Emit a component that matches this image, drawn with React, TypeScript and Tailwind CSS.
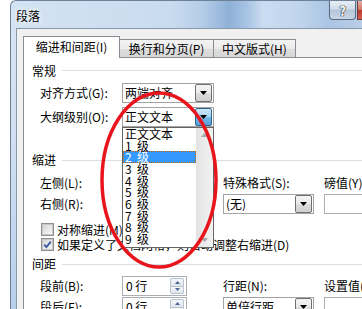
import React from "react";

const levels = ["正文文本", "1", "2", "3", "4", "5", "6", "7", "8", "9"];

function Arrow({ color = "#000" }: { color?: string }) {
  return (
    <svg width="7" height="4" viewBox="0 0 7 4" className="block">
      <path d="M0 0H7L3.5 4Z" fill={color} />
    </svg>
  );
}

function Select({ text, open, className = "w-[92px]" }: { text: string; open?: boolean; className?: string }) {
  return (
    <div className={`flex h-[20px] items-center border border-[#a3a3a3] bg-white ${className}`}>
      <span className="flex-1 whitespace-nowrap pl-[2px]">{text}</span>
      {open ? (
        <div className="mr-px flex h-[18px] w-[17px] items-center justify-center rounded-[2px] border border-[#2c628b] bg-[linear-gradient(#cbe7fa,#a2d3f2_50%,#74b9e8_51%,#559fd9)]">
          <Arrow />
        </div>
      ) : (
        <div className="mr-px flex h-[18px] w-[17px] items-center justify-center rounded-[2px] border border-[#707070] bg-[linear-gradient(#f4f4f4,#ebebeb_50%,#dddddd_51%,#cfcfcf)]">
          <Arrow />
        </div>
      )}
    </div>
  );
}

function Spinner({ text }: { text: string }) {
  return (
    <div className="flex h-[20px] w-[65px] items-center border border-[#abadb3] bg-white">
      <span className="flex-1 whitespace-pre pl-[3px]">{text}</span>
      <div className="mr-[2px] flex h-[16px] w-[14px] flex-col">
        <div className="flex flex-1 items-center justify-center rounded-t-[2px] border border-[#b8c3cf] bg-[linear-gradient(#f5f7fa,#dfe5ec)]">
          <svg width="5" height="3" viewBox="0 0 5 3" className="block">
            <path d="M0 3H5L2.5 0Z" fill="#4a6595" />
          </svg>
        </div>
        <div className="flex flex-1 items-center justify-center rounded-b-[2px] border border-t-0 border-[#b8c3cf] bg-[linear-gradient(#f5f7fa,#dfe5ec)]">
          <svg width="5" height="3" viewBox="0 0 5 3" className="block">
            <path d="M0 0H5L2.5 3Z" fill="#4a6595" />
          </svg>
        </div>
      </div>
    </div>
  );
}

function Heading({ text, className }: { text: string; className: string }) {
  return (
    <div className={`flex items-center ${className}`}>
      <span>{text}</span>
      <div className="ml-[6px] h-px flex-1 bg-[#d5dfe5]" />
    </div>
  );
}

function Checkbox({ checked }: { checked?: boolean }) {
  return (
    <div className="ml-px flex h-[13px] w-[13px] shrink-0 items-center justify-center border border-[#8e8f8f] bg-[#f4f4f4]">
      <div className="flex h-[11px] w-[11px] items-center justify-center border border-[#c8c8c8] bg-[linear-gradient(135deg,#d8d8d8,#f6f6f6)]">
        {checked && (
          <svg width="9" height="9" viewBox="0 0 9 9" className="block">
            <path d="M1.2 4.6L3.4 7L7.8 1.6" stroke="#3c58a4" strokeWidth="1.8" fill="none" />
          </svg>
        )}
      </div>
    </div>
  );
}

function Level({ l }: { l: string }) {
  if (l.length > 1) return <>{l}</>;
  return (
    <>
      <span className="inline-block w-[12px]">{l}</span>级
    </>
  );
}

function DropList() {
  return (
    <div className="absolute left-0 top-[20px] z-20 flex h-[121px] w-[92px] border border-[#646464] bg-white">
      <div className="flex-1">
        {levels.map((l, i) =>
          i === 2 ? (
            <div key={l} className="flex h-[11.7px] items-center whitespace-pre border border-dotted border-[#cc6600] bg-[#3399ff] pl-px text-white">
              <Level l={l} />
            </div>
          ) : (
            <div key={l} className="flex h-[11.7px] items-center whitespace-pre pl-[2px]">
              <Level l={l} />
            </div>
          )
        )}
      </div>
      <div className="flex w-[17px] flex-col items-center justify-between bg-[linear-gradient(90deg,#e2e2e2,#ebebeb_50%,#f2f2f2)] py-[5px]">
        <svg width="7" height="4" viewBox="0 0 7 4" className="block">
          <path d="M0 4H7L3.5 0Z" fill="#a8a8a8" />
        </svg>
        <Arrow color="#a8a8a8" />
      </div>
    </div>
  );
}

export default function App() {
  return (
    <div className="relative h-[309px] w-[362px] overflow-hidden bg-white font-['Noto_Sans_CJK_SC','Liberation_Sans',sans-serif] text-[12px] leading-none text-black">
      <div className="ml-[10px] flex h-full flex-col">
        {/* title bar */}
        <div className="flex h-[28px] shrink-0 items-start rounded-tl-[6px] border-l border-t border-[#6d8198] bg-[linear-gradient(90deg,#d4e3f3_0px,#c9dbef_160px,#b6cde8_190px,#8fb1d8_218px,#a6c2e3_235px,#cadcf1_252px,#bfd4ec_290px,#aac4e2_318px,#b9cfe9_352px)]">
          <span className="ml-[5px] mt-[9px] [text-shadow:0_0_6px_#fff,0_0_3px_#fff]">段落</span>
          <div className="ml-auto flex">
            <div className="flex h-[19px] w-[27px] items-center justify-center rounded-b-[4px] border border-t-0 border-[#5a6b80] bg-[linear-gradient(#e8eef6,#cfdbe8_45%,#b5c6da_50%,#c8d6e6)] text-[13px] font-bold text-white [text-shadow:0_0_1px_#222,0_0_1px_#222,0_0_1px_#222]">
              ?
            </div>
            <div className="ml-px h-[19px] w-[5px] border-l border-b border-[#6b3a36] bg-[linear-gradient(#e8b0a7,#d27063_50%,#bb3a2b_51%,#d25f50)]" />
          </div>
        </div>

        <div className="flex min-h-0 flex-1">
          {/* left frame */}
          <div className="w-[6px] border-l border-[#6d8198] bg-[linear-gradient(#d6e4f3,#cfdff1_45%,#b8cfeb)]" />

          {/* client */}
          <div className="flex min-w-0 flex-1 flex-col border-l border-t border-[#8a9aab] bg-[#f0f0f0] pl-[6px] pt-[7px]">
            {/* tabs */}
            <div className="flex h-[21px] shrink-0 items-end">
              <div className="relative z-10 -mb-px flex h-[22px] w-[97px] items-center justify-center border-x border-t border-[#898c95] bg-white pb-px">
                缩进和间距(I)
              </div>
              <div className="flex h-[18px] w-[94px] items-center justify-center border-r border-t border-[#898c95] bg-[linear-gradient(#f3f3f3,#ebebeb_50%,#dedede_51%,#d6d6d6)]">
                换行和分页(P)
              </div>
              <div className="flex h-[18px] w-[82px] items-center justify-center border-r border-t border-[#898c95] bg-[linear-gradient(#f3f3f3,#ebebeb_50%,#dedede_51%,#d6d6d6)]">
                中文版式(H)
              </div>
            </div>

            {/* tab page */}
            <div className="flex-1 border-l border-t border-[#898c95] bg-white pl-[8px]">
              <Heading text="常规" className="h-[25px]" />
              <div className="flex h-[20px] items-center pl-[8px]">
                <span className="w-[82px] shrink-0">对齐方式(G):</span>
                <Select text="两端对齐" />
              </div>
              <div className="mt-[4px] flex h-[20px] items-center pl-[8px]">
                <span className="w-[82px] shrink-0">大纲级别(O):</span>
                <div className="relative">
                  <Select text="正文文本" open />
                  <DropList />
                </div>
              </div>

              <Heading text="缩进" className="mt-[23px] h-[20px]" />
              {/* the two spinners in this block sit under the open list */}
              <div className="mt-[3px] flex h-[20px] items-center pl-[8px]">
                <span className="w-[82px] shrink-0">左侧(L):</span>
                <div className="w-[101px] shrink-0">
                  <Spinner text="" />
                </div>
                <span className="w-[101px] shrink-0">特殊格式(S):</span>
                <span className="shrink-0 whitespace-nowrap">磅值(Y):</span>
              </div>
              <div className="mt-px flex h-[20px] items-center pl-[8px]">
                <span className="w-[82px] shrink-0">右侧(R):</span>
                <div className="w-[101px] shrink-0">
                  <Spinner text="" />
                </div>
                <div className="w-[101px] shrink-0">
                  <Select text="(无)" className="w-[91px]" />
                </div>
                <div className="h-[20px] w-[60px] shrink-0 border border-[#abadb3] bg-white" />
              </div>

              <div className="mt-[8px] flex h-[15px] items-center gap-[3px] pl-[8px]">
                <Checkbox />
                <span className="whitespace-nowrap">对称缩进(M)</span>
              </div>
              <div className="flex h-[15px] items-center gap-[3px] pl-[8px]">
                <Checkbox checked />
                <span className="whitespace-nowrap">如果定义了文档网格，则自动调整右缩进(D)</span>
              </div>

              <Heading text="间距" className="mt-[2px] h-[20px]" />
              <div className="mt-[2px] flex h-[20px] items-center pl-[8px]">
                <span className="w-[82px] shrink-0">段前(B):</span>
                <div className="w-[101px] shrink-0">
                  <Spinner text="0 行" />
                </div>
                <span className="w-[101px] shrink-0">行距(N):</span>
                <span className="shrink-0 whitespace-nowrap">设置值(A):</span>
              </div>
              <div className="mt-px flex h-[20px] items-center pl-[8px]">
                <span className="w-[82px] shrink-0">段后(F):</span>
                <div className="w-[101px] shrink-0">
                  <Spinner text="0 行" />
                </div>
                <div className="w-[101px] shrink-0">
                  <Select text="单倍行距" className="w-[91px]" />
                </div>
                <div className="h-[20px] w-[60px] shrink-0 border border-[#abadb3] bg-white" />
              </div>
            </div>
          </div>
        </div>
      </div>

      {/* hand-drawn red circle */}
      <svg className="pointer-events-none absolute left-0 top-0 z-30" width="362" height="309" viewBox="0 0 362 309">
        <ellipse cx="159" cy="180" rx="57" ry="87" stroke="#e8151d" strokeWidth="3.5" fill="none" />
      </svg>
    </div>
  );
}
